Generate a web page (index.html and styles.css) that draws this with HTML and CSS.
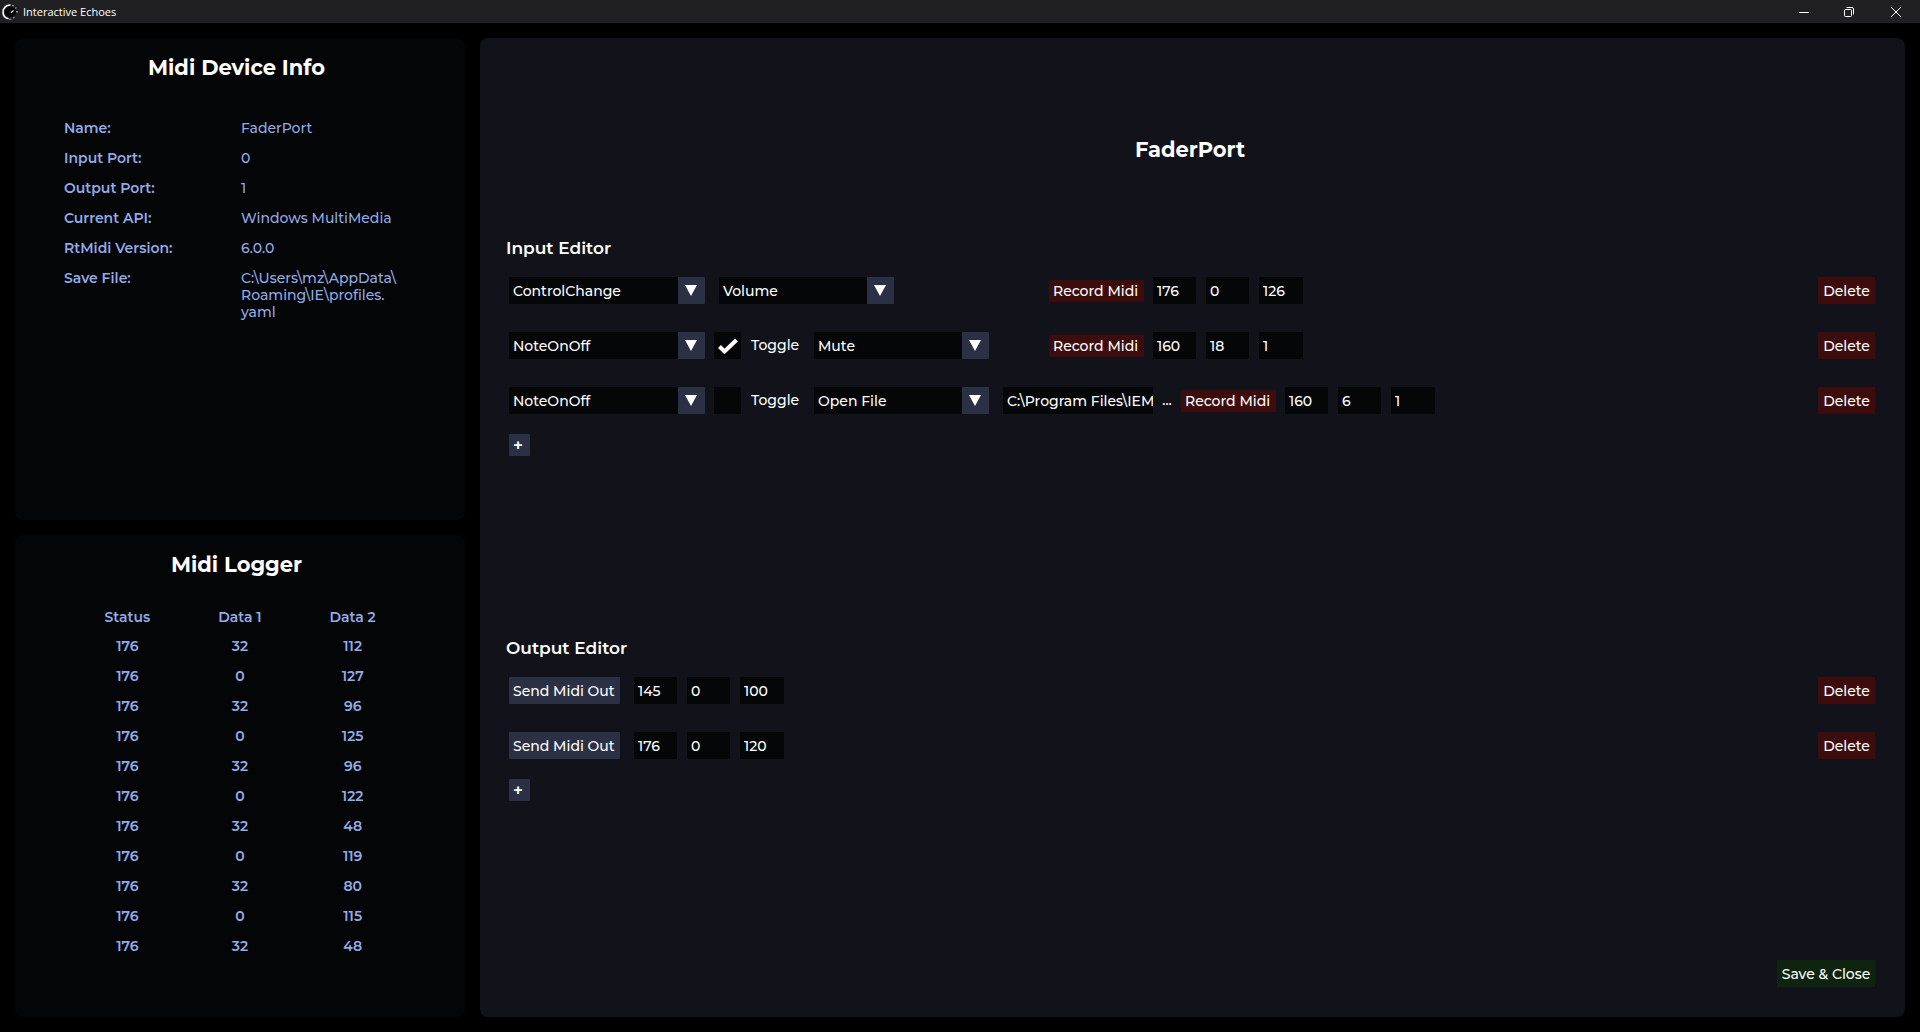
FILE: index.html
```html
<!DOCTYPE html>
<html lang="en">
<head>
<meta charset="utf-8">
<title>Interactive Echoes</title>
<link rel="stylesheet" href="styles.css">
</head>
<body>
<svg class="defs" aria-hidden="true"><symbol id="arrow" viewBox="0 0 12 11"><path d="M0 0h12L6 11z" fill="currentColor"/></symbol></svg>
<header class="titlebar">
  <svg class="logo" viewBox="0 0 16 16" aria-hidden="true">
    <circle cx="8.500" cy="8" r="5.500" fill="#050608"/>
    <path d="M8.500 1A7 7 0 0 0 1 8a7 7 0 0 0 5.500 6.800" fill="none" stroke="#fff" stroke-width="1.600"/>
    <path d="M7 15.300l2.500 .2M11 14l1.500-.8" stroke="#888" stroke-width="1.500"/>
    <path d="M9 8.800L11.500 6.500M10.500 1.400l1 .5M13.500 3.600l.6 .8M15 7v1.500" stroke="#ddd" stroke-width="1.200"/>
  </svg>
  <span class="app-name">Interactive Echoes</span>
  <div class="window-buttons">
    <button type="button" aria-label="Minimize"><svg viewBox="0 0 12 12"><path d="M1 6.500h10"/></svg></button>
    <button type="button" aria-label="Restore"><svg viewBox="0 0 12 12"><rect x="1.500" y="3.500" width="7" height="7" rx="1"/><path d="M3.500 1.500H9A1.500 1.500 0 0 1 10.500 3v5.500"/></svg></button>
    <button type="button" aria-label="Close"><svg viewBox="0 0 12 12"><path d="M1 1l10 10M11 1L1 11"/></svg></button>
  </div>
</header>
<div class="workspace">
  <section class="panel side">
    <h2>Midi Device Info</h2>
    <dl class="info">
      <dt>Name:</dt><dd>FaderPort</dd>
      <dt>Input Port:</dt><dd>0</dd>
      <dt>Output Port:</dt><dd>1</dd>
      <dt>Current API:</dt><dd>Windows MultiMedia</dd>
      <dt>RtMidi Version:</dt><dd>6.0.0</dd>
      <dt>Save File:</dt><dd>C:\Users\mz\AppData\<br>Roaming\IE\profiles.<br>yaml</dd>
    </dl>
  </section>
  <section class="panel side">
    <h2>Midi Logger</h2>
    <table class="log">
      <thead><tr><th>Status</th><th>Data 1</th><th>Data 2</th></tr></thead>
      <tbody>
        <tr><td>176</td><td>32</td><td>112</td></tr>
        <tr><td>176</td><td>0</td><td>127</td></tr>
        <tr><td>176</td><td>32</td><td>96</td></tr>
        <tr><td>176</td><td>0</td><td>125</td></tr>
        <tr><td>176</td><td>32</td><td>96</td></tr>
        <tr><td>176</td><td>0</td><td>122</td></tr>
        <tr><td>176</td><td>32</td><td>48</td></tr>
        <tr><td>176</td><td>0</td><td>119</td></tr>
        <tr><td>176</td><td>32</td><td>80</td></tr>
        <tr><td>176</td><td>0</td><td>115</td></tr>
        <tr><td>176</td><td>32</td><td>48</td></tr>
      </tbody>
    </table>
  </section>
  <main class="panel editor">
    <h1>FaderPort</h1>
    <section class="group inputs">
      <h3>Input Editor</h3>
      <div class="row">
        <div class="target">
          <div class="select type"><select aria-label="Message type"><option>ControlChange</option></select><svg><use href="#arrow"/></svg></div>
          <div class="select action"><select aria-label="Action"><option>Volume</option></select><svg><use href="#arrow"/></svg></div>
        </div>
        <button type="button" class="btn record">Record Midi</button>
        <div class="bytes"><input aria-label="Status" value="176"><input aria-label="Data 1" value="0"><input aria-label="Data 2" value="126"></div>
        <button type="button" class="btn delete">Delete</button>
      </div>
      <div class="row">
        <div class="target toggled">
          <div class="select type"><select aria-label="Message type"><option>NoteOnOff</option></select><svg><use href="#arrow"/></svg></div>
          <label class="toggle"><input type="checkbox" checked><svg viewBox="0 0 20 16"><path d="M1.500 8.500l5 5L18.500 2"/></svg><span>Toggle</span></label>
          <div class="select action"><select aria-label="Action"><option>Mute</option></select><svg><use href="#arrow"/></svg></div>
        </div>
        <button type="button" class="btn record">Record Midi</button>
        <div class="bytes"><input aria-label="Status" value="160"><input aria-label="Data 1" value="18"><input aria-label="Data 2" value="1"></div>
        <button type="button" class="btn delete">Delete</button>
      </div>
      <div class="row">
        <div class="target toggled">
          <div class="select type"><select aria-label="Message type"><option>NoteOnOff</option></select><svg><use href="#arrow"/></svg></div>
          <label class="toggle"><input type="checkbox"><svg viewBox="0 0 20 16"><path d="M1.500 8.500l5 5L18.500 2"/></svg><span>Toggle</span></label>
          <div class="select action"><select aria-label="Action"><option>Open File</option></select><svg><use href="#arrow"/></svg></div>
          <div class="file"><input aria-label="File path" value="C:\Program Files\IEM"><button type="button" aria-label="Browse">...</button></div>
        </div>
        <button type="button" class="btn record">Record Midi</button>
        <div class="bytes"><input aria-label="Status" value="160"><input aria-label="Data 1" value="6"><input aria-label="Data 2" value="1"></div>
        <button type="button" class="btn delete">Delete</button>
      </div>
      <button type="button" class="btn add" aria-label="Add input">+</button>
    </section>
    <section class="group">
      <h3>Output Editor</h3>
      <div class="row">
        <button type="button" class="btn send">Send Midi Out</button>
        <div class="bytes"><input aria-label="Status" value="145"><input aria-label="Data 1" value="0"><input aria-label="Data 2" value="100"></div>
        <button type="button" class="btn delete">Delete</button>
      </div>
      <div class="row">
        <button type="button" class="btn send">Send Midi Out</button>
        <div class="bytes"><input aria-label="Status" value="176"><input aria-label="Data 1" value="0"><input aria-label="Data 2" value="120"></div>
        <button type="button" class="btn delete">Delete</button>
      </div>
      <button type="button" class="btn add" aria-label="Add output">+</button>
    </section>
    <button type="button" class="btn save">Save &amp; Close</button>
  </main>
</div>
</body>
</html>
```
FILE: styles.css
```css
* { box-sizing: border-box; }

body {
  margin: 0;
  min-height: 100vh;
  display: flex;
  flex-direction: column;
  background: #000;
  color: #fff;
  font: 500 14px/17px Montserrat, Inter, sans-serif;
}

button, input, select {
  margin: 0;
  padding: 0;
  border: 0;
  border-radius: 1px;
  background: none;
  color: inherit;
  font: inherit;
}

h1, h2, h3, dl, dd { margin: 0; }

.defs { display: none; }

.titlebar {
  display: flex;
  align-items: center;
  height: 23px;
  padding-left: 2px;
  background: #202022;
  font: 11px/16px "Segoe UI", "Open Sans", sans-serif;
}
.logo { width: 16px; height: 16px; margin-right: 5px; }
.window-buttons { display: flex; margin-left: auto; }
.window-buttons button {
  display: grid;
  place-items: center;
  width: 45px;
  height: 20px;
}
.window-buttons button:last-child { width: 49px; }
.window-buttons svg {
  width: 12px;
  height: 12px;
  fill: none;
  stroke: #fff;
}

.workspace {
  flex: 1;
  display: grid;
  grid-template: 1fr 1fr / 450px 1fr;
  gap: 15px;
  padding: 15px;
}
.panel { border-radius: 8px; }
.side {
  padding: 18px 8px 0;
  background: #040507;
}
.side h2, .editor h1 {
  font-size: 21px;
  line-height: 24px;
  font-weight: 700;
  text-align: center;
}
.side h2 { padding-right: 7px; }

.info {
  display: grid;
  grid-template-columns: 177px 1fr;
  row-gap: 13px;
  padding: 40px 0 0 41px;
  color: #92abe6;
}
.info dt { font-weight: 600; }

.log {
  width: 338px;
  margin: 26px auto 0;
  border-collapse: collapse;
  table-layout: fixed;
  color: #92abe6;
  text-align: center;
  font-weight: 600;
}
.log th, .log td { height: 30px; padding: 0; font-weight: 600; }
.log th { height: 28px; }

.editor {
  grid-area: 1 / 2 / 3 / 3;
  display: flex;
  flex-direction: column;
  padding: 100px 30px 30px 29px;
  background: #11121a;
}
.editor h1 { margin-bottom: 74px; padding-right: 4px; }
.group {
  display: flex;
  flex-direction: column;
  gap: 28px;
}
.inputs { min-height: 400px; }
.group h3 {
  margin: 0 0 -11px -3px;
  font-size: 17px;
  line-height: 24px;
  font-weight: 600;
}
.row {
  display: flex;
  align-items: center;
  height: 27px;
}

.target { display: flex; gap: 14px; min-width: 540px; }
.toggled { gap: 9px; }
.select { display: grid; align-items: center; }
.select > * { grid-area: 1 / 1; }
.select select {
  appearance: none;
  width: 100%;
  height: 27px;
  padding: 1px 30px 0 4px;
  background: linear-gradient(#2b3044, #2b3044) right / 27px 100% no-repeat #050608;
}
.select svg {
  justify-self: end;
  width: 12px;
  height: 11px;
  margin-right: 8px;
  pointer-events: none;
}
.type { width: 196px; }
.action { width: 175px; }

.toggle { display: grid; grid-template-columns: 27px 54px; column-gap: 10px; align-items: center; }
.toggle input {
  grid-area: 1 / 1;
  appearance: none;
  width: 27px;
  height: 27px;
  background: #050608;
}
.toggle svg {
  grid-area: 1 / 1;
  justify-self: center;
  width: 20px;
  height: 16px;
  fill: none;
  stroke: #fff;
  stroke-width: 4;
  visibility: hidden;
}
.toggle input:checked + svg { visibility: visible; }

.file { display: flex; margin-left: 5px; }
.file input { width: 150px; height: 27px; padding-left: 4px; background: #050608; }
.file button { width: 28px; }

.btn { height: 27px; padding: 1px 4px 0; text-align: left; white-space: nowrap; }
.record { width: 95px; height: 22px; margin-right: 9px; background: #3d0d0d; }
.delete { width: 57px; margin-left: auto; text-align: center; background: #3d0d0d; }
.send { width: 111px; margin-right: 14px; background: #2b3044; }
.add {
  align-self: flex-start;
  width: 21px;
  height: 22px;
  margin-top: -8px;
  padding-top: 0;
  background: #2b3044;
  font-size: 17px;
  font-weight: 600;
}
.save { align-self: flex-end; margin-top: auto; width: 98px; text-align: center; background: #0e240e; }

.bytes { display: flex; gap: 10px; }
.bytes input { width: 43px; height: 27px; padding-left: 4px; background: #050608; }
.bytes input:last-child { width: 44px; }
```
